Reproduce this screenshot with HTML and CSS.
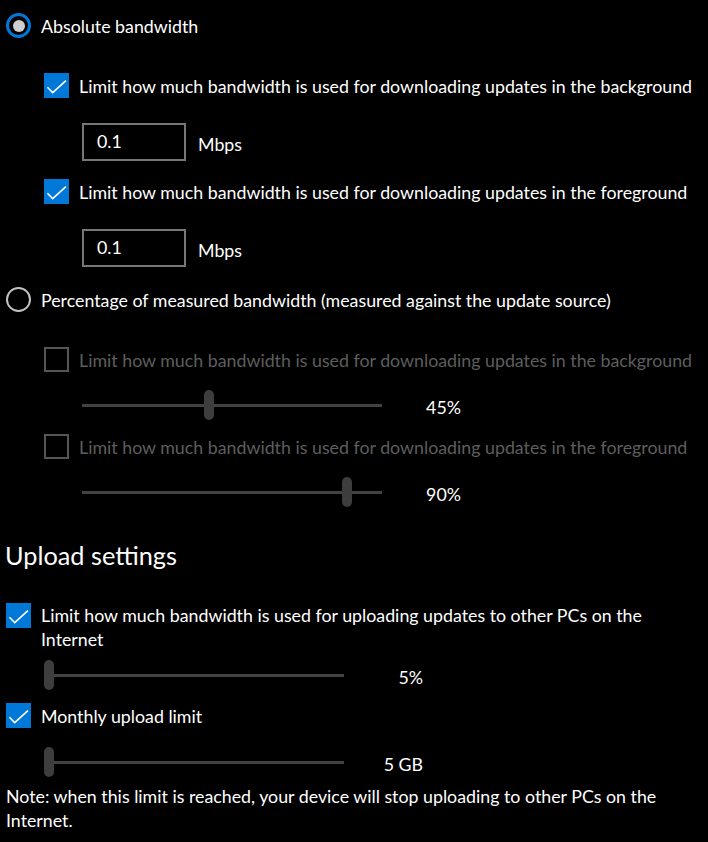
FILE: index.html
```html
<!DOCTYPE html>
<html lang="en">
<head>
<meta charset="utf-8">
<title>Delivery Optimization - Advanced options</title>
<link rel="stylesheet" href="styles.css">
</head>
<body>
<main class="page">
  <div class="row radio-row mt-13">
    <span class="radio checked"><span class="dot"></span></span>
    <span class="label">Absolute bandwidth</span>
  </div>

  <div class="row check-row indent1 mt-35">
    <span class="check on"><svg viewBox="0 0 25 25" width="25" height="25"><polyline points="3.4,14.3 8.7,19.6 21.9,7.6" fill="none" stroke="#fff" stroke-width="1.6"/></svg></span>
    <span class="label">Limit how much bandwidth is used for downloading updates in the background</span>
  </div>
  <div class="field-row indent2 mt-25">
    <div class="input">0.1</div>
    <span class="unit">Mbps</span>
  </div>

  <div class="row check-row indent1 mt-18">
    <span class="check on"><svg viewBox="0 0 25 25" width="25" height="25"><polyline points="3.4,14.3 8.7,19.6 21.9,7.6" fill="none" stroke="#fff" stroke-width="1.6"/></svg></span>
    <span class="label">Limit how much bandwidth is used for downloading updates in the foreground</span>
  </div>
  <div class="field-row indent2 mt-25">
    <div class="input">0.1</div>
    <span class="unit">Mbps</span>
  </div>

  <div class="row radio-row mt-20">
    <span class="radio"></span>
    <span class="label">Percentage of measured bandwidth (measured against the update source)</span>
  </div>

  <div class="row check-row indent1 mt-35 disabled">
    <span class="check off"></span>
    <span class="label">Limit how much bandwidth is used for downloading updates in the background</span>
  </div>
  <div class="slider-row indent2 mt-18">
    <div class="slider"><span class="track"></span><span class="thumb" style="left:122px"></span></div>
    <span class="value">45%</span>
  </div>

  <div class="row check-row indent1 mt-14 disabled">
    <span class="check off"></span>
    <span class="label">Limit how much bandwidth is used for downloading updates in the foreground</span>
  </div>
  <div class="slider-row indent2 mt-18">
    <div class="slider"><span class="track"></span><span class="thumb" style="left:260px"></span></div>
    <span class="value">90%</span>
  </div>

  <h2 class="section-title">Upload settings</h2>

  <div class="row check-row wrap mt-31">
    <span class="check on"><svg viewBox="0 0 25 25" width="25" height="25"><polyline points="3.4,14.3 8.7,19.6 21.9,7.6" fill="none" stroke="#fff" stroke-width="1.6"/></svg></span>
    <span class="label">Limit how much bandwidth is used for uploading updates to other PCs on the Internet</span>
  </div>
  <div class="slider-row indent1 mt-9">
    <div class="slider"><span class="track"></span><span class="thumb" style="left:0px"></span></div>
    <span class="value">5%</span>
  </div>

  <div class="row check-row mt-13">
    <span class="check on"><svg viewBox="0 0 25 25" width="25" height="25"><polyline points="3.4,14.3 8.7,19.6 21.9,7.6" fill="none" stroke="#fff" stroke-width="1.6"/></svg></span>
    <span class="label">Monthly upload limit</span>
  </div>
  <div class="slider-row indent1 mt-19">
    <div class="slider"><span class="track"></span><span class="thumb" style="left:0px"></span></div>
    <span class="value">5 GB</span>
  </div>

  <p class="note">Note: when this limit is reached, your device will stop uploading to other PCs on the Internet.</p>
</main>
</body>
</html>
```

FILE: styles.css
```css
html, body {
  margin: 0;
  padding: 0;
  background: #000;
}
body {
  color: #fff;
  font-family: Lato, "Open Sans", "Liberation Sans", sans-serif;
  font-size: 17.8px;
  line-height: 24px;
}
.page {
  padding-left: 6px;
  width: 702px;
}
.mt-9 { margin-top: 9px; }
.mt-13 { margin-top: 13px; }
.mt-14 { margin-top: 14px; }
.mt-18 { margin-top: 18px; }
.mt-19 { margin-top: 19px; }
.mt-20 { margin-top: 20px; }
.mt-25 { margin-top: 25px; }
.mt-31 { margin-top: 31px; }
.mt-35 { margin-top: 35px; }
.indent1 { margin-left: 38px; }
.indent2 { margin-left: 76px; }

.row {
  display: flex;
  align-items: center;
  gap: 10px;
  min-height: 25px;
}
.row .label { white-space: nowrap; }
.row.wrap { align-items: flex-start; }
.row.wrap .label { white-space: normal; width: 620px; }

.radio {
  box-sizing: border-box;
  width: 25px;
  height: 25px;
  border-radius: 50%;
  border: 2px solid #c2c2c2;
  display: flex;
  align-items: center;
  justify-content: center;
  flex: none;
}
.radio.checked {
  border: 3px solid #0078d7;
}
.radio .dot {
  width: 12px;
  height: 12px;
  border-radius: 50%;
  background: #cfcfcf;
}

.check {
  box-sizing: border-box;
  width: 25px;
  height: 25px;
  flex: none;
  display: block;
}
.check svg { display: block; }
.check.on { background: #0078d7; }
.check.off { border: 2px solid #555; }
.disabled .label { color: #5e5e5e; }

.field-row {
  display: flex;
  align-items: flex-start;
}
.input {
  box-sizing: border-box;
  width: 104px;
  height: 38px;
  border: 2px solid #767676;
  padding-left: 13px;
  line-height: 33px;
}
.unit {
  margin-left: 12px;
  margin-top: 9px;
}

.slider-row {
  display: flex;
  align-items: flex-start;
}
.slider {
  position: relative;
  width: 300px;
  height: 30px;
}
.track {
  position: absolute;
  left: 0;
  right: 0;
  top: 14px;
  height: 3px;
  background: #424242;
}
.thumb {
  position: absolute;
  top: 0;
  width: 10px;
  height: 30px;
  border-radius: 5px;
  background: #3d3d3d;
}
.value {
  width: 79px;
  text-align: right;
  margin-top: 5px;
}

.section-title {
  margin: 31px 0 0 -1px;
  font-size: 25.3px;
  line-height: 34px;
  font-weight: normal;
}
.note {
  margin: 7px 0 0 0;
  width: 680px;
}
```
